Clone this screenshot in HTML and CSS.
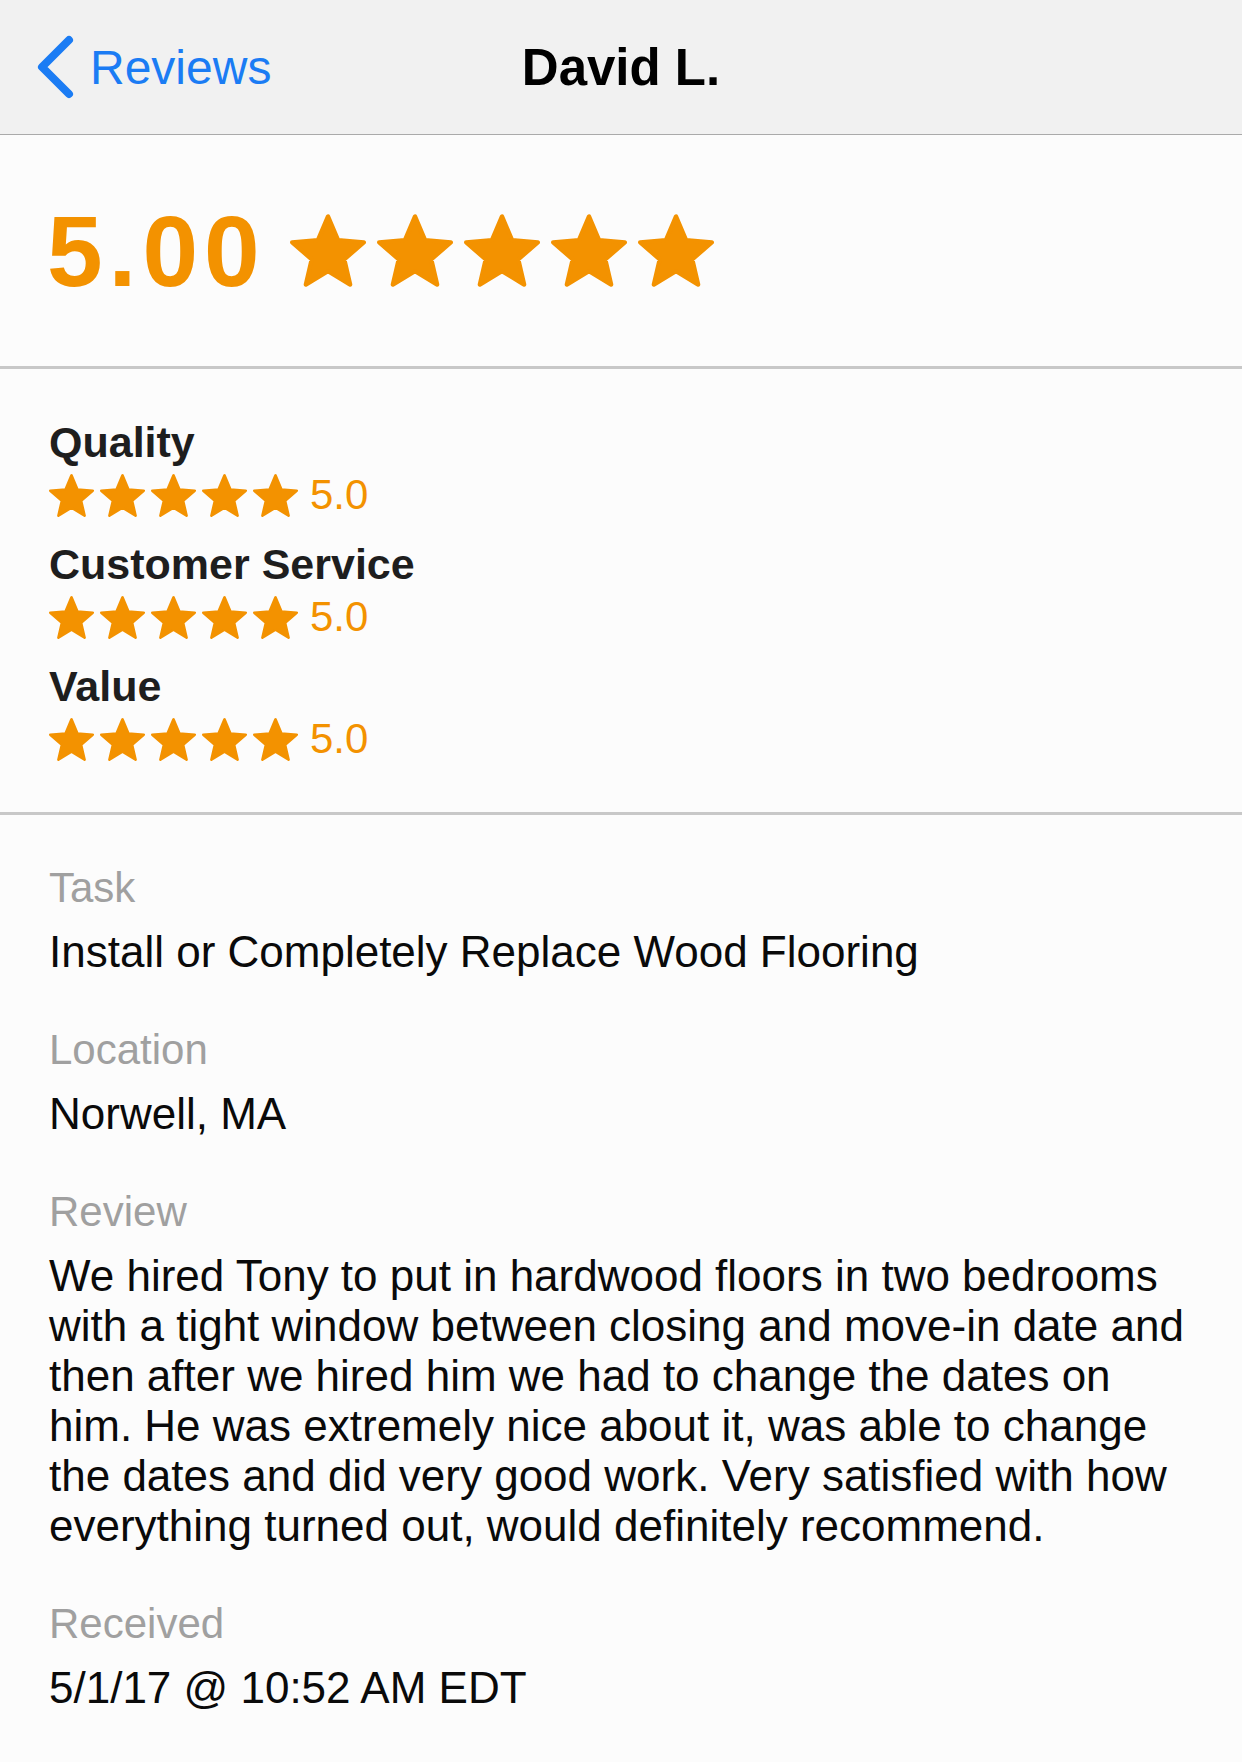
FILE: index.html
```html
<!DOCTYPE html>
<html lang="en">
<head>
    <meta charset="UTF-8">
    <meta name="viewport" content="width=device-width, initial-scale=1.0">
    <title>David L. - Review</title>
    <link rel="stylesheet" href="styles.css">
</head>
<body>
    <header class="nav-bar">
        <a href="#" class="back-link">
            <svg class="chevron" width="40" height="64" viewBox="0 0 40 64">
                <path d="M33 5 L6 32 L33 59" fill="none" stroke="currentColor" stroke-width="8" stroke-linecap="round" stroke-linejoin="round"/>
            </svg>
            <span>Reviews</span>
        </a>
        <h1 class="nav-title">David L.</h1>
        <div></div>
    </header>

    <main>
        <!-- Overall score -->
        <section class="overall">
            <span class="overall-score">5.00</span>
            <div class="stars stars-big">
                <svg viewBox="1.4 1.4 21.2 20.2"><path d="M12 17.27L18.18 21l-1.64-7.03L22 9.24l-7.19-.61L12 2 9.19 8.63 2 9.24l5.46 4.73L5.82 21z"/></svg>
                <svg viewBox="1.4 1.4 21.2 20.2"><path d="M12 17.27L18.18 21l-1.64-7.03L22 9.24l-7.19-.61L12 2 9.19 8.63 2 9.24l5.46 4.73L5.82 21z"/></svg>
                <svg viewBox="1.4 1.4 21.2 20.2"><path d="M12 17.27L18.18 21l-1.64-7.03L22 9.24l-7.19-.61L12 2 9.19 8.63 2 9.24l5.46 4.73L5.82 21z"/></svg>
                <svg viewBox="1.4 1.4 21.2 20.2"><path d="M12 17.27L18.18 21l-1.64-7.03L22 9.24l-7.19-.61L12 2 9.19 8.63 2 9.24l5.46 4.73L5.82 21z"/></svg>
                <svg viewBox="1.4 1.4 21.2 20.2"><path d="M12 17.27L18.18 21l-1.64-7.03L22 9.24l-7.19-.61L12 2 9.19 8.63 2 9.24l5.46 4.73L5.82 21z"/></svg>
            </div>
        </section>

        <!-- Category ratings -->
        <section class="categories" id="categories"></section>

        <!-- Review details -->
        <section class="details">
            <div class="detail">
                <div class="detail-label">Task</div>
                <div class="detail-value">Install or Completely Replace Wood Flooring</div>
            </div>
            <div class="detail">
                <div class="detail-label">Location</div>
                <div class="detail-value">Norwell, MA</div>
            </div>
            <div class="detail">
                <div class="detail-label">Review</div>
                <div class="detail-value">We hired Tony to put in hardwood floors in two bedrooms with a tight window between closing and move-in date and then after we hired him we had to change the dates on him. He was extremely nice about it, was able to change the dates and did very good work. Very satisfied with how everything turned out, would definitely recommend.</div>
            </div>
            <div class="detail">
                <div class="detail-label">Received</div>
                <div class="detail-value">5/1/17 @ 10:52 AM EDT</div>
            </div>
        </section>
    </main>

    <script>
        document.addEventListener("DOMContentLoaded", function () {
            const categories = [
                { name: "Quality", score: 5.0 },
                { name: "Customer Service", score: 5.0 },
                { name: "Value", score: 5.0 }
            ];

            const star = '<svg viewBox="1.4 1.4 21.2 20.2"><path d="M12 17.27L18.18 21l-1.64-7.03L22 9.24l-7.19-.61L12 2 9.19 8.63 2 9.24l5.46 4.73L5.82 21z"/></svg>';
            const container = document.getElementById("categories");

            categories.forEach(function (cat) {
                container.innerHTML += `
                    <div class="category">
                        <div class="category-name">${cat.name}</div>
                        <div class="category-row">
                            <div class="stars stars-small">${star.repeat(5)}</div>
                            <span class="category-score">${cat.score.toFixed(1)}</span>
                        </div>
                    </div>
                `;
            });
        });
    </script>
</body>
</html>
```

FILE: styles.css
```css
body {
    font-family: "Liberation Sans", Arial, sans-serif;
    margin: 0;
    padding: 0;
    background-color: #fcfcfc;
    color: #0a0a0a;
}

/* Navigation bar */
.nav-bar {
    display: grid;
    grid-template-columns: 1fr auto 1fr;
    align-items: center;
    height: 134px;
    background-color: #f1f1f1;
    border-bottom: 1px solid #aaaaaa;
}

.back-link {
    display: flex;
    align-items: center;
    padding-left: 36px;
    color: #1b7cf4;
    text-decoration: none;
    font-size: 48px;
}

.chevron {
    margin-right: 14px;
}

.nav-title {
    margin: 0;
    font-size: 51px;
    font-weight: bold;
    color: #000;
}

/* Overall score */
.overall {
    display: flex;
    align-items: center;
    height: 231px;
    padding-left: 47px;
    border-bottom: 3px solid #c8c8c8;
}

.overall-score {
    font-size: 100px;
    line-height: 1;
    font-weight: bold;
    letter-spacing: 6px;
    color: #f39200;
    margin-right: 24px;
}

.stars {
    display: flex;
}

.stars svg {
    fill: #f39200;
    stroke: #f39200;
    stroke-width: 1.2;
    stroke-linejoin: round;
}

.stars-big {
    gap: 11px;
}

.stars-big svg {
    width: 76px;
    height: 73px;
}

/* Category ratings */
.categories {
    padding: 48px 49px 48px;
    border-bottom: 3px solid #c8c8c8;
}

.category {
    margin-bottom: 19px;
}

.category:last-child {
    margin-bottom: 0;
}

.category-name {
    font-size: 43px;
    line-height: 50px;
    font-weight: bold;
    color: #1e1e1e;
}

.category-row {
    display: flex;
    align-items: center;
    height: 50px;
    margin-top: 3px;
}

.stars-small {
    gap: 6px;
}

.stars-small svg {
    width: 45px;
    height: 43px;
}

.category-score {
    font-size: 42px;
    color: #f39200;
    margin-left: 12px;
}

/* Review details */
.details {
    padding: 48px 43px 49px 49px;
}

.detail {
    margin-bottom: 48px;
}

.detail:last-child {
    margin-bottom: 0;
}

.detail-label {
    font-size: 42px;
    line-height: 50px;
    color: #a0a0a0;
}

.detail-value {
    font-size: 44px;
    line-height: 50px;
    margin-top: 14px;
}
```
